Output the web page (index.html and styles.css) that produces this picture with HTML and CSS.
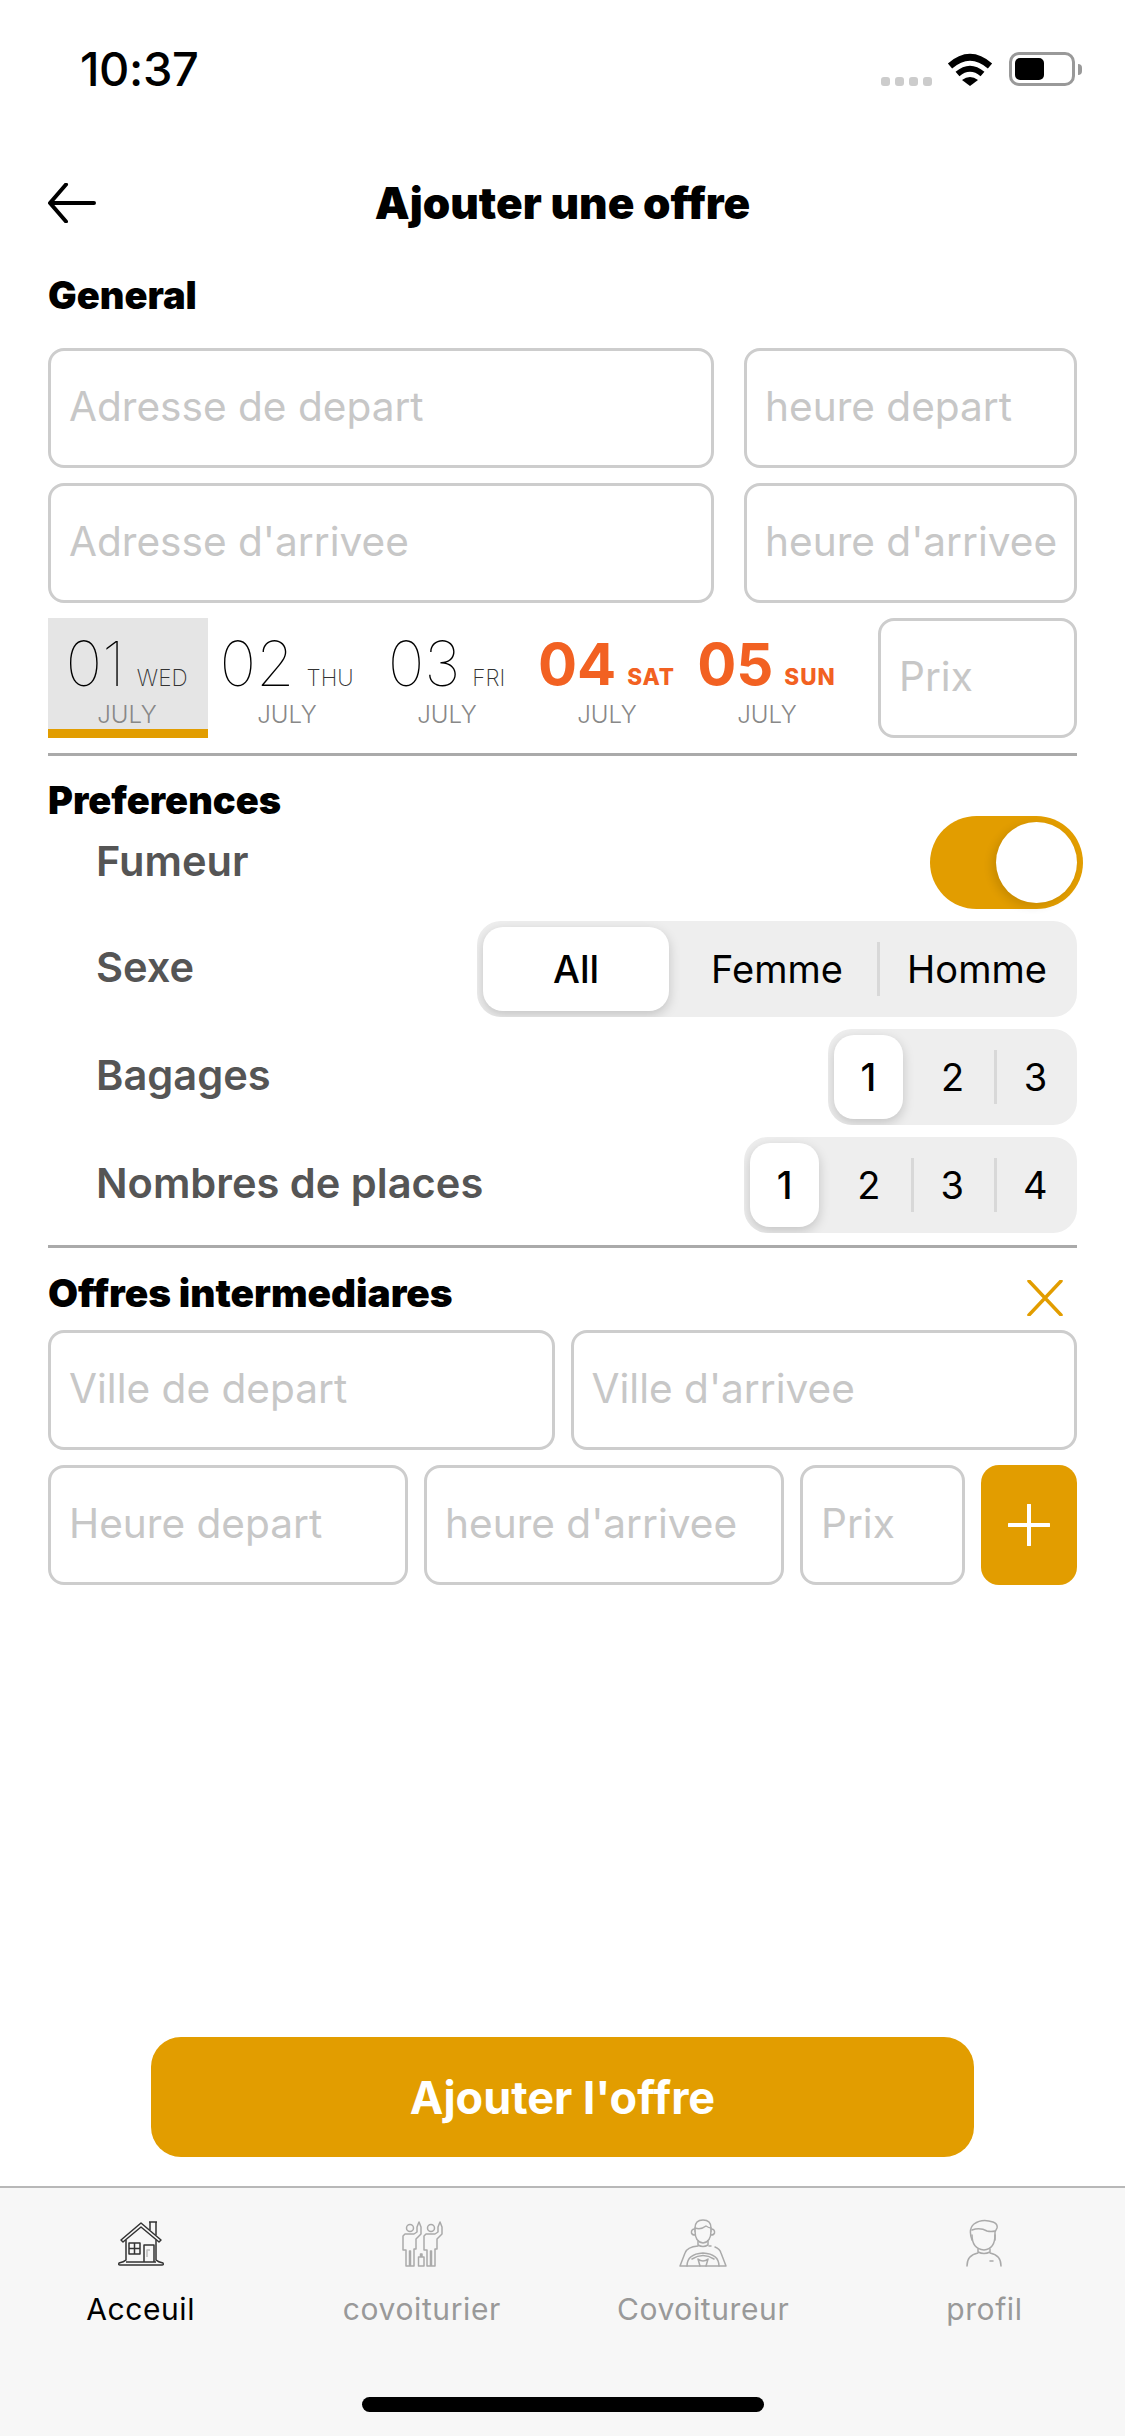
FILE: index.html
```html
<!DOCTYPE html>
<html lang="fr">
<head>
  <meta charset="UTF-8" />
  <title>Ajouter une offre</title>
  <link rel="stylesheet" href="styles.css">
</head>
<body>
  <div class="phone">
    <div class="status-bar">
      <span class="time">10:37</span>
      <div class="status-icons">
        <div class="signal"><i></i><i></i><i></i><i></i></div>
        <svg class="wifi" width="46" height="34" viewBox="0 0 46 34">
          <path d="M3 14 Q23 -3.500 43 14" fill="none" stroke="#000" stroke-width="6.500"/>
          <path d="M10.500 22 Q23 11.500 35.500 22" fill="none" stroke="#000" stroke-width="6"/>
          <path d="M15 28 Q23 22 31 28 L23 34 Z" fill="#000"/>
        </svg>
        <div class="battery"><div class="battery-level"></div></div>
        <div class="battery-cap"></div>
      </div>
    </div>

    <header class="top-bar">
      <svg class="back" width="48" height="40" viewBox="0 0 48 40">
        <path d="M46 20 H3 M18 1.500 L2 20 L18 38.500" fill="none" stroke="#000" stroke-width="4" stroke-linecap="round" stroke-linejoin="round"/>
      </svg>
      <h1>Ajouter une offre</h1>
    </header>

    <main class="form">
      <h2 class="general-title">General</h2>
      <div class="row">
        <input class="field grow-2" placeholder="Adresse de depart">
        <input class="field col-time" placeholder="heure depart">
      </div>
      <div class="row">
        <input class="field grow-2" placeholder="Adresse d'arrivee">
        <input class="field col-time" placeholder="heure d'arrivee">
      </div>
      <div class="row dates-row">
        <div class="dates">
          <div class="date active">
            <div class="date-top"><span class="day">01</span><span class="dow">WED</span></div>
            <div class="month">JULY</div>
          </div>
          <div class="date">
            <div class="date-top"><span class="day">02</span><span class="dow">THU</span></div>
            <div class="month">JULY</div>
          </div>
          <div class="date">
            <div class="date-top"><span class="day">03</span><span class="dow">FRI</span></div>
            <div class="month">JULY</div>
          </div>
          <div class="date weekend">
            <div class="date-top"><span class="day">04</span><span class="dow">SAT</span></div>
            <div class="month">JULY</div>
          </div>
          <div class="date weekend">
            <div class="date-top"><span class="day">05</span><span class="dow">SUN</span></div>
            <div class="month">JULY</div>
          </div>
        </div>
        <input class="field col-prix" placeholder="Prix">
      </div>

      <hr class="sep">

      <h2 class="pref-title">Preferences</h2>
      <div class="pref pref-toggle">
        <span class="pref-label">Fumeur</span>
        <div class="toggle"><div class="knob"></div></div>
      </div>
      <div class="pref">
        <span class="pref-label">Sexe</span>
        <div class="seg seg-sexe">
          <div class="seg-item active">All</div>
          <div class="seg-item">Femme</div>
          <div class="seg-item divided">Homme</div>
        </div>
      </div>
      <div class="pref">
        <span class="pref-label">Bagages</span>
        <div class="seg seg-3">
          <div class="seg-item active">1</div>
          <div class="seg-item">2</div>
          <div class="seg-item divided">3</div>
        </div>
      </div>
      <div class="pref">
        <span class="pref-label">Nombres de places</span>
        <div class="seg seg-4">
          <div class="seg-item active">1</div>
          <div class="seg-item">2</div>
          <div class="seg-item divided">3</div>
          <div class="seg-item divided">4</div>
        </div>
      </div>

      <hr class="sep">

      <div class="offers-head">
        <h2>Offres intermediares</h2>
        <svg width="36" height="36" viewBox="0 0 36 36">
          <path d="M2 1 L34 35 M34 1 L2 35" fill="none" stroke="#e29d00" stroke-width="3.500" stroke-linecap="round"/>
        </svg>
      </div>
      <div class="row">
        <input class="field grow-1" placeholder="Ville de depart">
        <input class="field grow-1" placeholder="Ville d'arrivee">
      </div>
      <div class="row">
        <input class="field grow-1" placeholder="Heure depart">
        <input class="field grow-1" placeholder="heure d'arrivee">
        <input class="field col-prix-sm" placeholder="Prix">
        <button class="add-btn">
          <svg width="42" height="42" viewBox="0 0 42 42">
            <path d="M21 1 V41 M1 21 H41" fill="none" stroke="#fff" stroke-width="4" stroke-linecap="round"/>
          </svg>
        </button>
      </div>
    </main>

    <div class="submit-wrap">
      <button class="submit">Ajouter l'offre</button>
    </div>

    <nav class="tabs">
      <div class="tab current">
        <svg width="48" height="48" viewBox="0 0 48 48" fill="none" stroke="#333" stroke-width="1.500" stroke-linejoin="round">
          <path d="M4 21 L24 4 L44 21 L42 23 L24 8 L6 23 Z"/>
          <path d="M33 11 V3 H39 V16 M32 3 H40"/>
          <path d="M9 21 V41 Q7 43 2 44 Q1 46 3 46 H45 Q47 46 46 44 Q41 43 39 41 V21"/>
          <path d="M9 43 H39"/>
          <rect x="12" y="24" width="11" height="11"/>
          <path d="M17.500 24 V35 M12 29.500 H23"/>
          <path d="M27 43 V26 H37 V43"/>
          <path d="M30 38 V31 H33" stroke="#bbb"/>
        </svg>
        <span>Acceuil</span>
      </div>
      <div class="tab">
        <svg width="48" height="48" viewBox="0 0 48 48" fill="none" stroke="#aaa" stroke-width="1.500" stroke-linejoin="round">
          <circle cx="12" cy="9" r="3.500"/>
          <path d="M7 15 H16 L19 13 V8 L21 3 L23 8 V15 L18 20 V30 H16 V47 H12.500 V32 H11.500 V47 H8 V31 H5 V17 Z"/>
          <circle cx="33" cy="9" r="3.500"/>
          <path d="M28 15 H37 L40 13 V8 L42 3 L44 8 V15 L39 20 V30 H37 V47 H33.500 V32 H32.500 V47 H29 V31 H26 V17 Z"/>
          <path d="M20.500 47 V38 H26 V47 Z M22.500 38 V35 H24 V38"/>
        </svg>
        <span>covoiturier</span>
      </div>
      <div class="tab">
        <svg width="48" height="48" viewBox="0 0 48 48" fill="none" stroke="#aaa" stroke-width="1.500" stroke-linejoin="round" stroke-linecap="round">
          <path d="M16 12 V9 Q16 1 24 1 Q32 1 32 9 V12"/>
          <path d="M16 9 Q22 11 27 7 Q30 9 32 9"/>
          <path d="M16 10 Q12 10 12.500 14 Q13 16 16 16 M32 10 Q36 10 35.500 14 Q35 16 32 16"/>
          <path d="M16 12 Q16 23 24 24 Q32 23 32 12"/>
          <path d="M19 22 V26 Q24 29 29 26 V22"/>
          <path d="M19 27 Q8 28 6 34 L1 47 H47 L42 34 Q41 30 36 28 M30 27 H32"/>
          <path d="M8 47 Q8 35 24 34 Q40 35 40 47"/>
          <path d="M13 40 Q24 33 35 40 M19 40 L21 47 M29 40 L27 47 M19 40 Q24 44 29 40"/>
        </svg>
        <span>Covoitureur</span>
      </div>
      <div class="tab">
        <svg width="48" height="48" viewBox="0 0 48 48" fill="none" stroke="#aaa" stroke-width="1.500" stroke-linejoin="round" stroke-linecap="round">
          <path d="M12 21 Q8 10 14 5 Q22 -1 33 3 Q38 5 37 9 L35 13 L35 21"/>
          <path d="M12 11 Q20 8 27 12 Q31 13 35 12"/>
          <path d="M12 16 Q12 30 24 31 Q35 30 35 16"/>
          <path d="M18 30 V33 Q24 36 30 33 V30"/>
          <path d="M18 34 Q7 36 7 47 M30 34 Q41 36 41 47 M30 42 H33"/>
        </svg>
        <span>profil</span>
      </div>
      <div class="home-indicator"></div>
    </nav>
  </div>
</body>
</html>
```

FILE: styles.css
```css
* {
  box-sizing: border-box;
}
body {
  margin: 0;
  background: #fff;
  font-family: Inter, "Noto Sans", sans-serif;
  color: #000;
}
.phone {
  width: 1125px;
  height: 2436px;
  display: flex;
  flex-direction: column;
  overflow: hidden;
}

/* status bar */
.status-bar {
  height: 170px;
  padding: 41px 43px 0 80px;
  display: flex;
  justify-content: space-between;
  align-items: flex-start;
}
.time {
  font-size: 47px;
  line-height: 56px;
  font-weight: 500;
  letter-spacing: -0.4px;
}
.status-icons {
  display: flex;
  align-items: flex-end;
  padding-top: 11px;
}
.signal {
  display: flex;
  gap: 5px;
  margin-right: 15px;
}
.signal i {
  width: 9px;
  height: 9px;
  border-radius: 3px;
  background: #ccc;
}
.battery {
  width: 66px;
  height: 34px;
  margin-left: 16px;
  padding: 3px;
  border: 3px solid #999;
  border-radius: 10px;
}
.battery-level {
  width: 29px;
  height: 22px;
  background: #000;
  border-radius: 5px;
}
.battery-cap {
  width: 4px;
  height: 11px;
  margin: 0 0 11px 3px;
  background: #999;
  border-radius: 0 4px 4px 0;
}

/* header */
.top-bar {
  height: 66px;
  padding: 0 48px;
  display: flex;
  align-items: center;
}
.top-bar h1 {
  margin: 0 0 0 -48px;
  flex: 1;
  text-align: center;
  font-size: 44px;
  font-weight: 900;
}

/* form */
.form {
  flex: 1;
  padding: 0 48px;
}
h2 {
  margin: 0;
  font-size: 38px;
  font-weight: 900;
  line-height: 36px;
}
.general-title {
  margin-top: 41px;
  margin-bottom: 35px;
}
.row {
  display: flex;
  gap: 30px;
  margin-bottom: 15px;
}
.field {
  height: 120px;
  min-width: 0;
  padding: 0 4px 3px 18px;
  border: 3px solid #cdcdcd;
  border-radius: 16px;
  background: #fff;
  font-family: inherit;
  font-size: 40.600px;
  outline: none;
}
.field::placeholder {
  color: #c7c7c7;
  opacity: 1;
}
.grow-2 {
  width: 666px;
}
.col-time {
  flex: 1;
}
.grow-1 {
  flex: 1;
}
.col-prix {
  width: 199px;
  margin-left: auto;
}
.col-prix-sm {
  width: 165px;
}

/* the bottom two rows use narrower gaps */
.row:has(.grow-1) {
  gap: 16px;
}

.dates {
  display: flex;
}
.date {
  width: 160px;
  height: 120px;
  padding-top: 18px;
  text-align: center;
}
.date.active {
  background: #e5e5e5;
  border-bottom: 9px solid #e29d00;
}
.date-top {
  display: flex;
  justify-content: center;
  align-items: baseline;
  gap: 12px;
  padding-right: 3px;
}
.day {
  font-size: 62px;
  line-height: 56px;
  font-weight: 100;
}
.dow {
  font-size: 22.500px;
  font-weight: 200;
  color: #333;
}
.month {
  margin-top: 9px;
  padding-right: 2px;
  font-size: 24px;
  line-height: 28px;
  font-weight: 300;
  color: #888;
}
.weekend .date-top {
  gap: 11px;
}
.weekend .day {
  font-size: 58px;
  font-weight: 700;
  color: #f26122;
}
.weekend .dow {
  font-weight: 800;
  color: #f26122;
  letter-spacing: 1px;
}
.sep {
  height: 3px;
  margin: 0;
  border: none;
  background: #aaa;
}

/* preferences */
.pref-title {
  margin-top: 28px;
  line-height: 32px;
}
.pref {
  display: flex;
  justify-content: space-between;
  align-items: center;
  padding-left: 48px;
  margin-bottom: 12px;
}
.pref-toggle {
  margin-right: -6px;
}
.pref-label {
  padding-bottom: 4px;
  font-size: 41.600px;
  font-weight: 600;
  color: #555;
}
.toggle {
  width: 153px;
  height: 93px;
  padding: 6px;
  display: flex;
  justify-content: flex-end;
  background: #e29d00;
  border-radius: 47px;
}
.knob {
  width: 81px;
  height: 81px;
  background: #fff;
  border-radius: 50%;
  box-shadow: -4px 3px 10px rgba(0, 0, 0, 0.12);
}
.seg {
  height: 96px;
  display: grid;
  background: #eee;
  border-radius: 24px;
  overflow: hidden;
}
.seg-sexe {
  width: 600px;
  grid-template-columns: repeat(3, 1fr);
}
.seg-3 {
  width: 249px;
  grid-template-columns: repeat(3, 1fr);
}
.seg-4 {
  width: 333px;
  grid-template-columns: repeat(4, 1fr);
}
.seg-item {
  display: flex;
  align-items: center;
  justify-content: center;
  font-size: 38px;
}
.seg-item.active {
  margin: 6px 8px 6px 6px;
  background: #fff;
  border-radius: 20px;
  font-weight: 500;
  box-shadow: 0 4px 12px rgba(0, 0, 0, 0.18);
}
.seg-item.divided {
  background: linear-gradient(#d8d8d8, #d8d8d8) left center / 3px 54px no-repeat;
}

/* intermediate offers */
.offers-head {
  display: flex;
  justify-content: space-between;
  align-items: flex-start;
  padding-right: 14px;
  margin-top: 32px;
  margin-bottom: 14px;
}
.offers-head h2 {
  font-size: 38.800px;
  line-height: 26px;
}
.add-btn {
  width: 96px;
  height: 120px;
  padding: 0;
  border: none;
  border-radius: 18px;
  background: #e29d00;
  display: flex;
  align-items: center;
  justify-content: center;
}

/* submit */
.submit-wrap {
  display: flex;
  justify-content: center;
  padding-bottom: 29px;
}
.submit {
  width: 823px;
  height: 120px;
  border: none;
  border-radius: 30px;
  background: #e29d00;
  color: #fff;
  font-family: inherit;
  font-size: 45px;
  font-weight: 700;
}

/* tab bar */
.tabs {
  height: 250px;
  padding-top: 31px;
  display: grid;
  grid-template-columns: repeat(4, 1fr);
  grid-template-rows: auto 1fr;
  justify-items: center;
  background: #f7f7f7;
  border-top: 2px solid #b8b8b8;
}
.tab {
  display: flex;
  flex-direction: column;
  align-items: center;
  gap: 24px;
  font-size: 30px;
  line-height: 36px;
  letter-spacing: 0.6px;
  color: #999;
}
.tab.current {
  color: #000;
}
.home-indicator {
  grid-column: 1 / -1;
  align-self: end;
  width: 402px;
  height: 15px;
  margin-bottom: 24px;
  border-radius: 8px;
  background: #000;
}
```
